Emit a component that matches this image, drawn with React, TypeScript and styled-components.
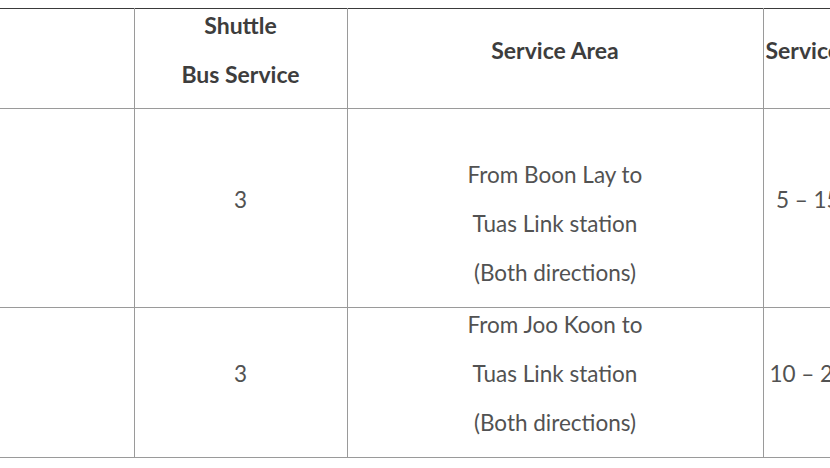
import React from "react";
import styled, { createGlobalStyle } from "styled-components";

const GlobalStyle = createGlobalStyle`
  html, body {
    margin: 0;
    padding: 0;
    background: #ffffff;
    overflow: hidden;
  }
`;

const Wrapper = styled.div`
  padding-top: 8px;
  width: 830px;
  overflow: hidden;
  font-family: Lato, "Liberation Sans", sans-serif;
`;

const Table = styled.table`
  border-collapse: collapse;
  table-layout: fixed;
  width: 937px;
  border-top: 1px solid #3a3a3a;
  border-bottom: 1px solid #3a3a3a;
`;

const Cell = styled.td<{ $head?: boolean }>`
  border: 1px solid #9a9a9a;
  border-top: none;
  padding: ${(p) => (p.$head ? "1px 2px 0" : "2px 2px 0")};
  text-align: center;
  vertical-align: middle;
  white-space: nowrap;
  color: ${(p) => (p.$head ? "#3d3d3d" : "#525252")};
  font-weight: ${(p) => (p.$head ? 700 : 400)};
  font-size: ${(p) => (p.$head ? "23px" : "22.5px")};

  &:first-child {
    border-left: none;
  }
`;

const Line = styled.p`
  margin: 0 0 19px;
  line-height: 30px;
`;

const rows = [
  {
    buses: "3",
    area: ["\u00a0", "From Boon Lay to", "Tuas Link station", "(Both directions)"],
    freq: "5 – 15 minutes",
  },
  {
    buses: "3",
    area: ["From Joo Koon to", "Tuas Link station", "(Both directions)"],
    freq: "10 – 20 minutes",
  },
];

export default function App() {
  return (
    <Wrapper>
      <GlobalStyle />
      <Table>
        <colgroup>
          <col style={{ width: 134 }} />
          <col style={{ width: 213 }} />
          <col style={{ width: 416 }} />
          <col style={{ width: 174 }} />
        </colgroup>
        <thead>
          <tr>
            <Cell $head />
            <Cell $head>
              <Line>Shuttle</Line>
              <Line>Bus Service</Line>
            </Cell>
            <Cell $head>
              <Line>Service Area</Line>
            </Cell>
            <Cell $head>
              <Line>Service Frequency</Line>
            </Cell>
          </tr>
        </thead>
        <tbody>
          {rows.map((r, i) => (
            <tr key={i}>
              <Cell />
              <Cell>
                <Line>{r.buses}</Line>
              </Cell>
              <Cell>
                {r.area.map((t, j) => (
                  <Line key={j}>{t}</Line>
                ))}
              </Cell>
              <Cell>
                <Line>{r.freq}</Line>
              </Cell>
            </tr>
          ))}
        </tbody>
      </Table>
    </Wrapper>
  );
}
